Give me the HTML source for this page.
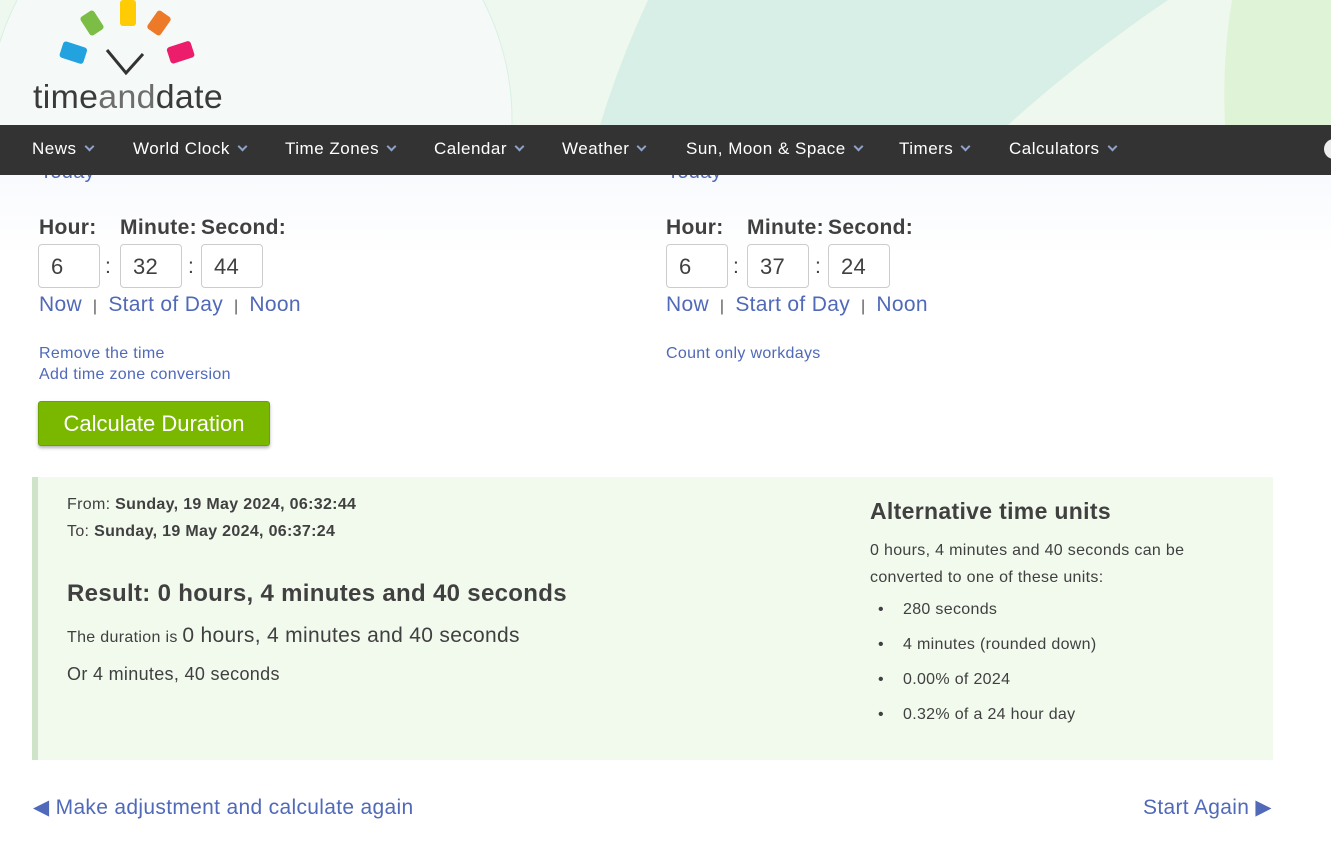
<!DOCTYPE html>
<html><head><meta charset="utf-8"><style>
*{margin:0;padding:0;box-sizing:border-box}
body{width:1331px;height:844px;overflow:hidden;background:#fff;font-family:"Liberation Sans",Arial,sans-serif;color:#404040;position:relative;letter-spacing:0.02em}
.a{position:absolute;white-space:nowrap}
.lk{color:#5069b8}
.nav{position:absolute;left:0;top:125px;width:1331px;height:50px;background:#333}
.nav span{position:absolute;top:14px;color:#fff;font-size:17px;letter-spacing:0.5px}
.nav i{display:inline-block;width:7px;height:7px;border-right:2px solid #8fa2c8;border-bottom:2px solid #8fa2c8;transform:rotate(45deg);margin-left:9px;position:relative;top:-4px}
.lbl{font-size:21px;font-weight:bold;color:#404040}
.in{position:absolute;width:62px;height:44px;border:1px solid #ccc;border-radius:4px;background:#fff;font-size:22px;padding:9px 0 0 12px;color:#404040}
.colon{font-size:21px}
.l21{font-size:21px}
.sep{font-size:16px;color:#555}
</style></head><body>
<svg class="a" style="left:0;top:0" width="1331" height="125">
<rect width="1331" height="125" fill="#eef8ee"/>
<circle cx="250" cy="120" r="262" fill="#f5faf8" stroke="#d8f0e6" stroke-width="1"/>
<path d="M648 0 L1168 0 Q1080 60 1008 125 L600 125 Q620 60 648 0Z" fill="#d8efe8"/>
<path d="M1232 0 L1331 0 L1331 125 L1225 125 Q1222 60 1232 0Z" fill="#dff3d6"/>
<rect x="84" y="12" width="16" height="22" rx="3" fill="#7cbd45" transform="rotate(-33 92 23)"/>
<rect x="120" y="0" width="16" height="26" rx="3" fill="#ffcb05"/>
<rect x="151" y="12" width="16" height="22" rx="3" fill="#ec7a29" transform="rotate(35 159 23)"/>
<rect x="61" y="44" width="25" height="17" rx="3" fill="#22a2de" transform="rotate(18 73 52)"/>
<rect x="168" y="44" width="25" height="17" rx="3" fill="#ec1e6b" transform="rotate(-18 180 52)"/>
<path d="M107 50 L126 73 L143 54" fill="none" stroke="#333" stroke-width="3"/>
<text x="33" y="108" font-family="Liberation Sans,sans-serif" font-size="33" fill="#3a3a3a" textLength="190" lengthAdjust="spacingAndGlyphs">time<tspan fill="#6d6d6d">and</tspan>date</text>
</svg>
<div class="a" style="left:0;top:175px;width:1331px;height:669px;background:linear-gradient(#f8fafd,#fff 80px)"></div>
<div class="nav">
<span style="left:32px">News<i></i></span>
<span style="left:133px">World Clock<i></i></span>
<span style="left:285px">Time Zones<i></i></span>
<span style="left:434px">Calendar<i></i></span>
<span style="left:562px">Weather<i></i></span>
<span style="left:686px">Sun, Moon &amp; Space<i></i></span>
<span style="left:899px">Timers<i></i></span>
<span style="left:1009px">Calculators<i></i></span>
<div style="position:absolute;left:1324px;top:14px;width:20px;height:20px;border-radius:50%;background:#eee"></div>
</div>
<div class="a lk l21" style="left:40px;top:161px;clip-path:inset(14px 0 0 0);font-size:20px">Today</div>
<div class="a lk l21" style="left:667px;top:161px;clip-path:inset(14px 0 0 0);font-size:20px">Today</div>

<div class="a lbl" style="left:39px;top:216px">Hour:</div>
<div class="a lbl" style="left:120px;top:216px">Minute:</div>
<div class="a lbl" style="left:201px;top:216px">Second:</div>
<div class="in" style="left:38px;top:244px">6</div>
<div class="a colon" style="left:105px;top:255px">:</div>
<div class="in" style="left:120px;top:244px">32</div>
<div class="a colon" style="left:188px;top:255px">:</div>
<div class="in" style="left:201px;top:244px">44</div>
<div class="a l21" style="left:39px;top:293px"><span class="lk">Now</span> <span class="sep">&nbsp;|&nbsp;</span> <span class="lk">Start of Day</span> <span class="sep">&nbsp;|&nbsp;</span> <span class="lk">Noon</span></div>
<div class="a lk" style="left:39px;top:345px;font-size:16px">Remove the time</div>
<div class="a lk" style="left:39px;top:366px;font-size:16px">Add time zone conversion</div>
<div class="a" style="left:38px;top:401px;width:232px;height:45px;background:#7ab800;border:1px solid #6aa200;border-radius:3px;box-shadow:0 2px 3px rgba(0,0,0,.3);color:#fff;font-size:22px;text-align:center;line-height:43px;letter-spacing:0">Calculate Duration</div>

<div class="a lbl" style="left:666px;top:216px">Hour:</div>
<div class="a lbl" style="left:747px;top:216px">Minute:</div>
<div class="a lbl" style="left:828px;top:216px">Second:</div>
<div class="in" style="left:666px;top:244px">6</div>
<div class="a colon" style="left:733px;top:255px">:</div>
<div class="in" style="left:747px;top:244px">37</div>
<div class="a colon" style="left:815px;top:255px">:</div>
<div class="in" style="left:828px;top:244px">24</div>
<div class="a l21" style="left:666px;top:293px"><span class="lk">Now</span> <span class="sep">&nbsp;|&nbsp;</span> <span class="lk">Start of Day</span> <span class="sep">&nbsp;|&nbsp;</span> <span class="lk">Noon</span></div>
<div class="a lk" style="left:666px;top:345px;font-size:16px">Count only workdays</div>

<div class="a" style="left:32px;top:477px;width:1241px;height:283px;background:#f2faee;border-left:6px solid #cfe3c8"></div>
<div class="a" style="left:67px;top:496px;font-size:16px">From: <b>Sunday, 19 May 2024, 06:32:44</b></div>
<div class="a" style="left:67px;top:523px;font-size:16px">To: <b>Sunday, 19 May 2024, 06:37:24</b></div>
<div class="a" style="left:67px;top:580px;font-size:24px;font-weight:bold">Result: 0 hours, 4 minutes and 40 seconds</div>
<div class="a" style="left:67px;top:624px;font-size:16px">The duration is <span style="font-size:21px">0 hours, 4 minutes and 40 seconds</span></div>
<div class="a" style="left:67px;top:664px;font-size:18px">Or 4 minutes, 40 seconds</div>

<div class="a" style="left:870px;top:498px;font-size:23px;font-weight:bold">Alternative time units</div>
<div class="a" style="left:870px;top:537px;font-size:16px;line-height:27px">0 hours, 4 minutes and 40 seconds can be<br>converted to one of these units:</div>
<div class="a" style="left:878px;top:592px;font-size:16px;line-height:35px">
<div>•&nbsp;&nbsp;&nbsp;&nbsp;280 seconds</div><div>•&nbsp;&nbsp;&nbsp;&nbsp;4 minutes (rounded down)</div><div>•&nbsp;&nbsp;&nbsp;&nbsp;0.00% of 2024</div><div>•&nbsp;&nbsp;&nbsp;&nbsp;0.32% of a 24 hour day</div></div>

<div class="a lk" style="left:33px;top:795px;font-size:21px">◀ Make adjustment and calculate again</div>
<div class="a lk" style="left:1143px;top:795px;font-size:21px">Start Again ▶</div>
</body></html>
